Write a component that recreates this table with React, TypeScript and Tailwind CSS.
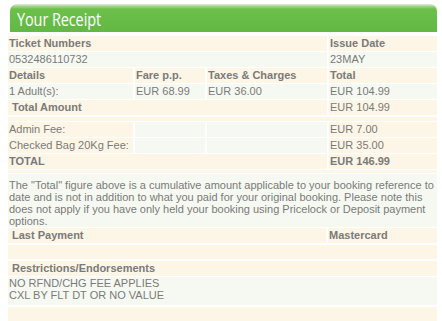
const cream = "bg-[#fdf6e6]";
const mint = "bg-[#f6f9f1]";

function Cell({ children, className = "" }: { children?: React.ReactNode; className?: string }) {
  return <div className={`h-[15px] leading-[15px] px-[1px] whitespace-nowrap ${className}`}>{children}</div>;
}

const four = "grid grid-cols-[125px_70px_120px_1fr] gap-x-[2px]";
const two = "grid grid-cols-[319px_1fr] gap-x-[2px]";

export default function App() {
  return (
    <div className="w-[442px] h-[321px] bg-white overflow-hidden text-[11px] text-[#7a7a7a] font-['Liberation_Sans',Arial,sans-serif]">
      {/* Header */}
      <div className="ml-[10px] mr-[5px] mt-[4px] h-[28px] rounded-t-[7px] bg-[linear-gradient(to_bottom,#e4ece0_0px,#a9d893_2px,#6cc04a_5px,#62b844_100%)] flex items-end pl-[7px] pb-[1px]">
        <span className="inline-block origin-left scale-x-[0.76] text-white text-[19px] leading-[23px] tracking-[-0.1px] font-['Open_Sans',sans-serif]">
          Your Receipt
        </span>
      </div>

      <div className="ml-[8px] mr-[5px] mt-[4px] flex flex-col gap-[1px]">
        {/* ticket numbers / issue date */}
        <div className={two}>
          <Cell className={`${cream} font-bold`}>Ticket Numbers</Cell>
          <Cell className={`${cream} font-bold`}>Issue Date</Cell>
        </div>
        <div className={two}>
          <Cell className={mint}>0532486110732</Cell>
          <Cell className={mint}>23MAY</Cell>
        </div>
        <div className={four}>
          <Cell className={`${cream} font-bold`}>Details</Cell>
          <Cell className={`${cream} font-bold`}>Fare p.p.</Cell>
          <Cell className={`${cream} font-bold`}>Taxes &amp; Charges</Cell>
          <Cell className={`${cream} font-bold`}>Total</Cell>
        </div>
        <div className={four}>
          <Cell className={mint}>1 Adult(s):</Cell>
          <Cell className={mint}>EUR 68.99</Cell>
          <Cell className={mint}>EUR 36.00</Cell>
          <Cell className={mint}>EUR 104.99</Cell>
        </div>
        <div className={two}>
          <Cell className={`${cream} font-bold pl-[4px]`}>Total Amount</Cell>
          <Cell className={cream}>EUR 104.99</Cell>
        </div>
        <div className={`h-[4px] mt-[1px] ${cream}`} />
        <div className={four}>
          <Cell className={cream}>Admin Fee:</Cell>
          <Cell className={mint} />
          <Cell className={mint} />
          <Cell className={cream}>EUR 7.00</Cell>
        </div>
        <div className={four}>
          <Cell className={cream}>Checked Bag 20Kg Fee:</Cell>
          <Cell className={mint} />
          <Cell className={mint} />
          <Cell className={cream}>EUR 35.00</Cell>
        </div>
        <div className={two}>
          <Cell className={`${cream} font-bold`}>TOTAL</Cell>
          <Cell className={`${cream} font-bold`}>EUR 146.99</Cell>
        </div>
        <div className={`h-[3px] ${cream}`} />

        {/* note */}
        <div className={`${mint} h-[53px] pt-[5px] px-[1px] leading-[12px]`}>
          The "Total" figure above is a cumulative amount applicable to your booking reference to date and is not in
          addition to what you paid for your original booking. Please note this does not apply if you have only held
          your booking using Pricelock or Deposit payment options.
        </div>

        <div className="grid grid-cols-[318px_1fr] gap-x-[2px]">
          <Cell className={`${cream} font-bold pl-[4px] h-[14px] leading-[14px]`}>Last Payment</Cell>
          <Cell className={`${cream} font-bold h-[14px] leading-[14px]`}>Mastercard</Cell>
        </div>
        <div className={`h-[14px] mt-[1px] ${cream}`} />
        <Cell className={`${cream} font-bold pl-[4px] h-[14px] leading-[14px] mt-[1px]`}>Restrictions/Endorsements</Cell>
        <div className={`${mint} h-[28px] px-[1px] leading-[12px]`}>
          NO RFND/CHG FEE APPLIES
          <br />
          CXL BY FLT DT OR NO VALUE
        </div>
        <div className={`h-[20px] mt-[1px] ${cream}`} />
      </div>
    </div>
  );
}
